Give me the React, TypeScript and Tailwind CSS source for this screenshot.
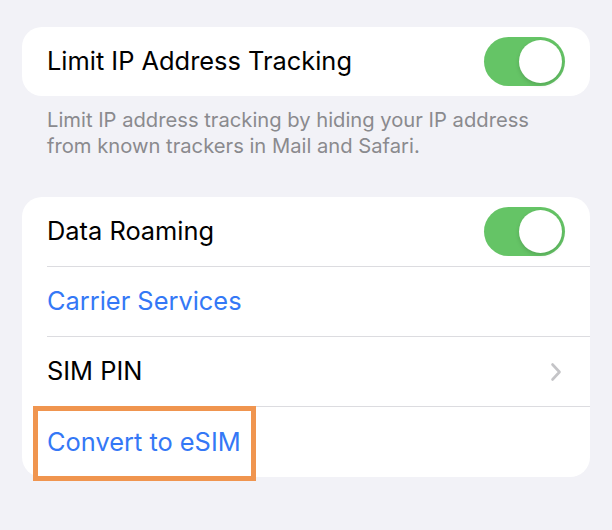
import React from "react";

function Toggle() {
  return (
    <div className="relative w-[81px] h-[49px] rounded-full bg-[#65c466] shrink-0">
      <div className="absolute right-[3px] top-[3px] w-[43px] h-[43px] rounded-full bg-white shadow-[0_2px_4px_rgba(0,0,0,0.15)]" />
    </div>
  );
}

function Chevron() {
  return (
    <svg width="12" height="20" viewBox="0 0 12 20" fill="none" className="shrink-0">
      <path d="M2.5 2.5 L9.5 10 L2.5 17.5" stroke="#c4c4c7" strokeWidth="2.6" strokeLinecap="round" strokeLinejoin="round" />
    </svg>
  );
}

export default function App() {
  const font = { fontFamily: "Inter, 'Noto Sans', sans-serif" };
  return (
    <div className="w-full h-[530px] bg-[#f2f2f7] pt-[27px] px-[22px] overflow-hidden" style={font}>
      <div className="h-[69px] rounded-[20px] bg-white flex items-center justify-between pl-[25px] pr-[25px]">
        <span className="text-[25.4px] text-black">Limit IP Address Tracking</span>
        <Toggle />
      </div>
      <div className="mt-[11px] px-[25px] text-[20.2px] leading-[26px] text-[#8a8a8e]">
        Limit IP address tracking by hiding your IP address
        <br />
        from known trackers in Mail and Safari.
      </div>
      <div className="mt-[38px] rounded-[20px] bg-white">
        <div className="h-[70px] pl-[25px]">
          <div className="h-full flex items-center justify-between pr-[25px] border-b border-[#dcdce0]">
            <span className="text-[25.4px] text-black">Data Roaming</span>
            <Toggle />
          </div>
        </div>
        <div className="h-[70px] pl-[25px]">
          <div className="h-full flex items-center pr-[25px] border-b border-[#dcdce0]">
            <span className="text-[25.4px] text-[#3478f6]">Carrier Services</span>
          </div>
        </div>
        <div className="h-[70px] pl-[25px]">
          <div className="h-full flex items-center justify-between pr-[28px] border-b border-[#dcdce0]">
            <span className="text-[25.4px] text-black">SIM PIN</span>
            <Chevron />
          </div>
        </div>
        <div className="relative h-[70px] pl-[25px]">
          <div className="h-full flex items-center pr-[25px]">
            <span className="text-[25.4px] text-[#3478f6]">Convert to eSIM</span>
          </div>
          <div className="absolute left-[11px] top-[-1px] w-[223px] h-[75px] border-[5px] border-[#f0954f]" />
        </div>
      </div>
    </div>
  );
}
